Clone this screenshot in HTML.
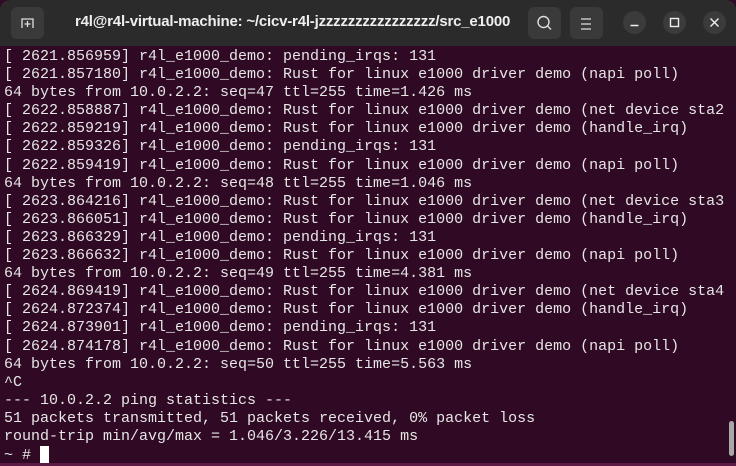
<!DOCTYPE html>
<html><head><style>
body{margin:0;width:736px;height:466px;overflow:hidden;background:#300a24;}
.tb{position:absolute;left:0;top:0;width:736px;height:46px;background:#2b2b2b;border-radius:10px 10px 0 0;}
.btn{position:absolute;top:7px;width:33px;height:32px;border-radius:6px;background:#3a3a3a;}
.cb{position:absolute;width:23px;height:23px;border-radius:50%;background:#3b3b3b;top:11px;}
.title{position:absolute;left:75px;top:13px;white-space:nowrap;color:#eee;font:bold 15px "Liberation Sans",sans-serif;letter-spacing:-0.2px;}
pre{position:absolute;left:4px;top:48px;margin:0;font:15px/18.1px "Liberation Mono","DejaVu Sans Mono",monospace;color:#e6e6e6;}
.cur{display:inline-block;width:9px;height:17px;background:#fff;vertical-align:-4px;}
.sb{position:absolute;left:729px;top:421px;width:5px;height:35px;border-radius:3px;background:#a8a8a8;}
.bot{position:absolute;left:0;top:463px;width:736px;height:3px;background:#5a1a45;}
</style></head><body>
<div class="tb">
<div class="btn" style="left:11px"><svg width="33" height="32"><path d="M11 21V12h11v9" fill="none" stroke="#ddd" stroke-width="1.3"/><path d="M16.5 14v6M13.5 17h6" stroke="#ddd" stroke-width="1.3"/></svg></div>
<div class="title">r4l@r4l-virtual-machine: ~/cicv-r4l-jzzzzzzzzzzzzzzzz/src_e1000</div>
<div class="btn" style="left:528px"><svg width="33" height="32"><circle cx="15.5" cy="15" r="5.5" fill="none" stroke="#ddd" stroke-width="1.4"/><path d="M19.5 19l3.5 3.5" stroke="#ddd" stroke-width="1.4"/></svg></div>
<div class="btn" style="left:570px"><svg width="33" height="32"><path d="M11 12h10M11 17h10M11 22h10" stroke="#ddd" stroke-width="1.3"/></svg></div>
<div class="cb" style="left:623px"><svg width="23" height="23"><path d="M7.5 14.5h8" stroke="#eee" stroke-width="1.5"/></svg></div>
<div class="cb" style="left:663px"><svg width="23" height="23"><rect x="7.5" y="7.5" width="8" height="8" fill="none" stroke="#eee" stroke-width="1.4"/></svg></div>
<div class="cb" style="left:703px"><svg width="23" height="23"><path d="M7.5 7.5l8 8M15.5 7.5l-8 8" stroke="#eee" stroke-width="1.4"/></svg></div>
</div>
<pre>[ 2621.856959] r4l_e1000_demo: pending_irqs: 131
[ 2621.857180] r4l_e1000_demo: Rust for linux e1000 driver demo (napi poll)
64 bytes from 10.0.2.2: seq=47 ttl=255 time=1.426 ms
[ 2622.858887] r4l_e1000_demo: Rust for linux e1000 driver demo (net device sta2
[ 2622.859219] r4l_e1000_demo: Rust for linux e1000 driver demo (handle_irq)
[ 2622.859326] r4l_e1000_demo: pending_irqs: 131
[ 2622.859419] r4l_e1000_demo: Rust for linux e1000 driver demo (napi poll)
64 bytes from 10.0.2.2: seq=48 ttl=255 time=1.046 ms
[ 2623.864216] r4l_e1000_demo: Rust for linux e1000 driver demo (net device sta3
[ 2623.866051] r4l_e1000_demo: Rust for linux e1000 driver demo (handle_irq)
[ 2623.866329] r4l_e1000_demo: pending_irqs: 131
[ 2623.866632] r4l_e1000_demo: Rust for linux e1000 driver demo (napi poll)
64 bytes from 10.0.2.2: seq=49 ttl=255 time=4.381 ms
[ 2624.869419] r4l_e1000_demo: Rust for linux e1000 driver demo (net device sta4
[ 2624.872374] r4l_e1000_demo: Rust for linux e1000 driver demo (handle_irq)
[ 2624.873901] r4l_e1000_demo: pending_irqs: 131
[ 2624.874178] r4l_e1000_demo: Rust for linux e1000 driver demo (napi poll)
64 bytes from 10.0.2.2: seq=50 ttl=255 time=5.563 ms
^C
--- 10.0.2.2 ping statistics ---
51 packets transmitted, 51 packets received, 0% packet loss
round-trip min/avg/max = 1.046/3.226/13.415 ms
~ # <span class="cur"></span></pre>
<div class="sb"></div>
<div class="bot"></div>
</body></html>
